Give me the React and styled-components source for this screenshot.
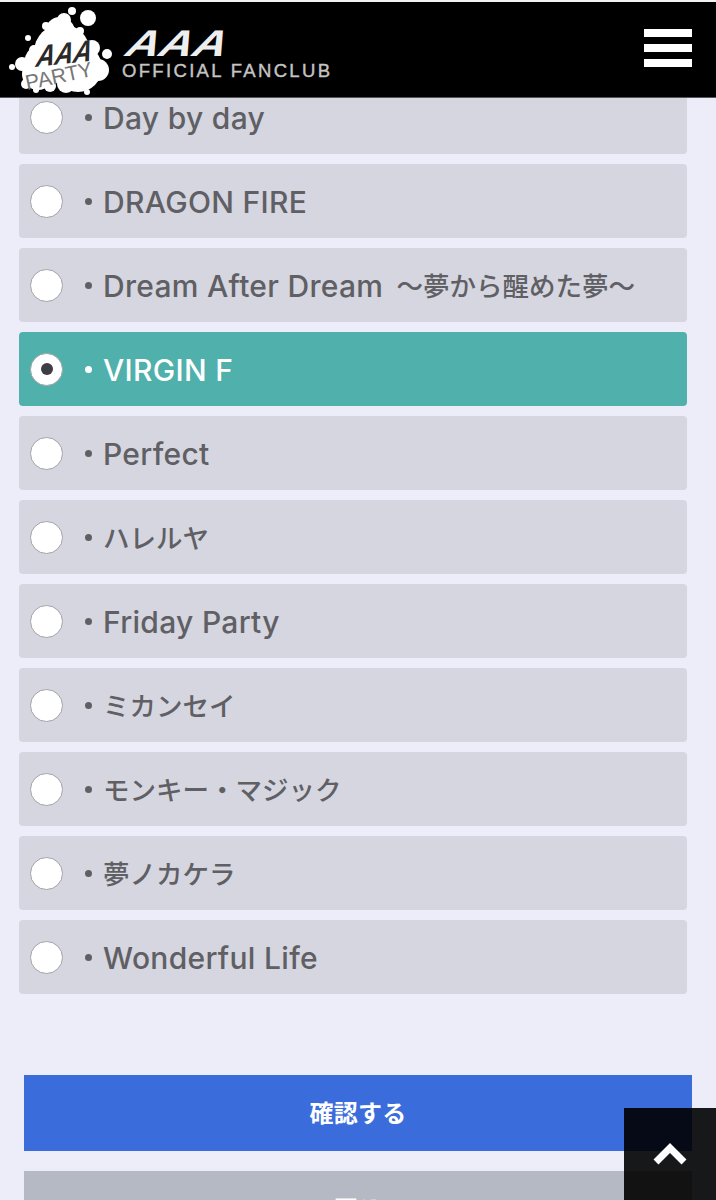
import React from 'react';
import styled, { createGlobalStyle } from 'styled-components';

const GlobalStyle = createGlobalStyle`
  html, body {
    margin: 0;
    padding: 0;
    background: #ecedf9;
  }
  body {
    font-family: "Inter", "Noto Sans CJK JP", sans-serif;
  }
`;

const Page = styled.div`
  position: relative;
  width: 716px;
  height: 1200px;
  overflow: hidden;
  background: #ecedf9;
`;

const Header = styled.header`
  position: absolute;
  top: 0;
  left: 0;
  right: 0;
  z-index: 2;
  height: 95px;
  display: flex;
  align-items: center;
  justify-content: space-between;
  padding-right: 24px;
  background: #000;
  border-top: 2px solid #f2f2f2;
  border-bottom: 1px solid #55555a;
`;

const Menu = styled.div`
  display: flex;
  flex-direction: column;
  gap: 7px;
  width: 48px;
  margin-top: -3px;
`;

const MenuBar = styled.span`
  display: block;
  height: 8px;
  background: #fff;
`;

const Content = styled.main`
  padding: 80px 29px 0 19px;
`;

const SongList = styled.div`
  display: flex;
  flex-direction: column;
  gap: 10px;
`;

const SongRow = styled.label`
  display: flex;
  align-items: center;
  height: 74px;
  padding-left: 11px;
  border-radius: 4px;
  font-size: 30px;
  font-weight: 500;
  letter-spacing: 0.3px;
  line-height: 34px;
  color: ${(p) => (p.$selected ? '#fff' : '#5f5f64')};
  background: ${(p) => (p.$selected ? '#50b0ab' : '#d5d6e0')};
`;

const Radio = styled.span`
  flex: none;
  display: flex;
  align-items: center;
  justify-content: center;
  width: 33px;
  height: 33px;
  margin-right: 12px;
  box-sizing: border-box;
  border-radius: 50%;
  background: #fff;
  border: 1.5px solid #a2a2a6;
`;

const RadioDot = styled.span`
  width: 12px;
  height: 12px;
  border-radius: 50%;
  background: #3d3e44;
`;

const Bullet = styled.span`
  flex: none;
  width: 7px;
  height: 7px;
  margin: 0 11px 0 10px;
  border-radius: 50%;
  background: currentColor;
`;

const SongName = styled.span`
  margin-top: 2px;
  white-space: nowrap;
`;

const LatinRun = styled.span``;

const CjkRun = styled.span`
  font-size: 26.5px;
  letter-spacing: 0;
  vertical-align: 1px;
  ${LatinRun} + & {
    margin-left: 5px;
  }
`;

const Actions = styled.div`
  display: flex;
  flex-direction: column;
  gap: 20px;
  margin: 81px -5px 0 5px;
`;

const ActionButton = styled.button`
  height: 76px;
  padding: 0 0 3px;
  border: none;
  color: #fff;
  font-family: inherit;
  font-size: 24px;
  font-weight: 700;
  letter-spacing: 0.3px;
  background: ${(p) => (p.$primary ? '#3b6cdb' : '#b5b9c4')};
`;

const BackToTop = styled.div`
  position: absolute;
  right: 0;
  bottom: 0;
  z-index: 3;
  display: flex;
  justify-content: center;
  width: 92px;
  height: 92px;
  padding-top: 34px;
  box-sizing: border-box;
  background: rgba(0, 0, 0, 0.9);
`;

const songs = [
  'Day by day',
  'DRAGON FIRE',
  'Dream After Dream 〜夢から醒めた夢〜',
  'VIRGIN F',
  'Perfect',
  'ハレルヤ',
  'Friday Party',
  'ミカンセイ',
  'モンキー・マジック',
  '夢ノカケラ',
  'Wonderful Life',
];

// latin and japanese are set at different sizes in the list
const splitRuns = (song) => song.match(/[\u0020-\u007e]+|[^\u0020-\u007e]+/g);

function Logo() {
  const blobs = [
    [62, 50, 28], [46, 62, 22], [78, 66, 24], [60, 30, 15], [38, 72, 16],
    [72, 9, 4], [88, 16, 8], [80, 29, 4], [64, 18, 7], [46, 24, 4],
    [107, 52, 5], [92, 46, 8], [98, 68, 11], [12, 65, 3], [22, 62, 7],
    [28, 36, 3], [87, 90, 3], [66, 82, 9], [50, 84, 6], [26, 82, 5],
    [36, 88, 3], [34, 48, 5],
  ];
  return (
    <svg width="340" height="95" viewBox="0 0 340 95">
      {blobs.map(([cx, cy, r], i) => (
        <circle key={i} cx={cx} cy={cy} r={r} fill="#fff" />
      ))}
      <text transform="translate(34 65) rotate(-6) skewX(-24)" fontFamily="Liberation Sans" fontSize="30" fontWeight="700" textLength="56" lengthAdjust="spacingAndGlyphs" fill="#2a2a2a">AAA</text>
      <text transform="translate(27 88) rotate(-12)" fontFamily="Liberation Sans" fontSize="21" textLength="68" lengthAdjust="spacingAndGlyphs" fill="#777">PARTY</text>
      <text transform="translate(122 54) skewX(-28)" fontFamily="Liberation Sans" fontSize="37" fontWeight="700" textLength="100" lengthAdjust="spacingAndGlyphs" fill="#eee">AAA</text>
      <text x="122" y="75" fontFamily="Liberation Sans" fontSize="18.5" textLength="208" stroke="#c4c4c4" strokeWidth="0.4" fill="#c4c4c4">OFFICIAL FANCLUB</text>
    </svg>
  );
}

export default function App() {
  return (
    <Page>
      <GlobalStyle />
      <Header>
        <Logo />
        <Menu>
          <MenuBar />
          <MenuBar />
          <MenuBar />
        </Menu>
      </Header>
      <Content>
        <SongList>
          {songs.map((song) => {
            const selected = song === 'VIRGIN F';
            return (
              <SongRow key={song} $selected={selected}>
                <Radio>{selected && <RadioDot />}</Radio>
                <Bullet />
                <SongName>
                  {splitRuns(song).map((run) =>
                    /^[\u0020-\u007e]/.test(run)
                      ? <LatinRun key={run}>{run}</LatinRun>
                      : <CjkRun key={run}>{run}</CjkRun>
                  )}
                </SongName>
              </SongRow>
            );
          })}
        </SongList>
        <Actions>
          <ActionButton $primary>確認する</ActionButton>
          <ActionButton>戻る</ActionButton>
        </Actions>
      </Content>
      <BackToTop>
        <svg width="40" height="26" viewBox="0 0 40 26">
          <polyline points="6,20 20,6 34,20" fill="none" stroke="#fff" strokeWidth="7" />
        </svg>
      </BackToTop>
    </Page>
  );
}
